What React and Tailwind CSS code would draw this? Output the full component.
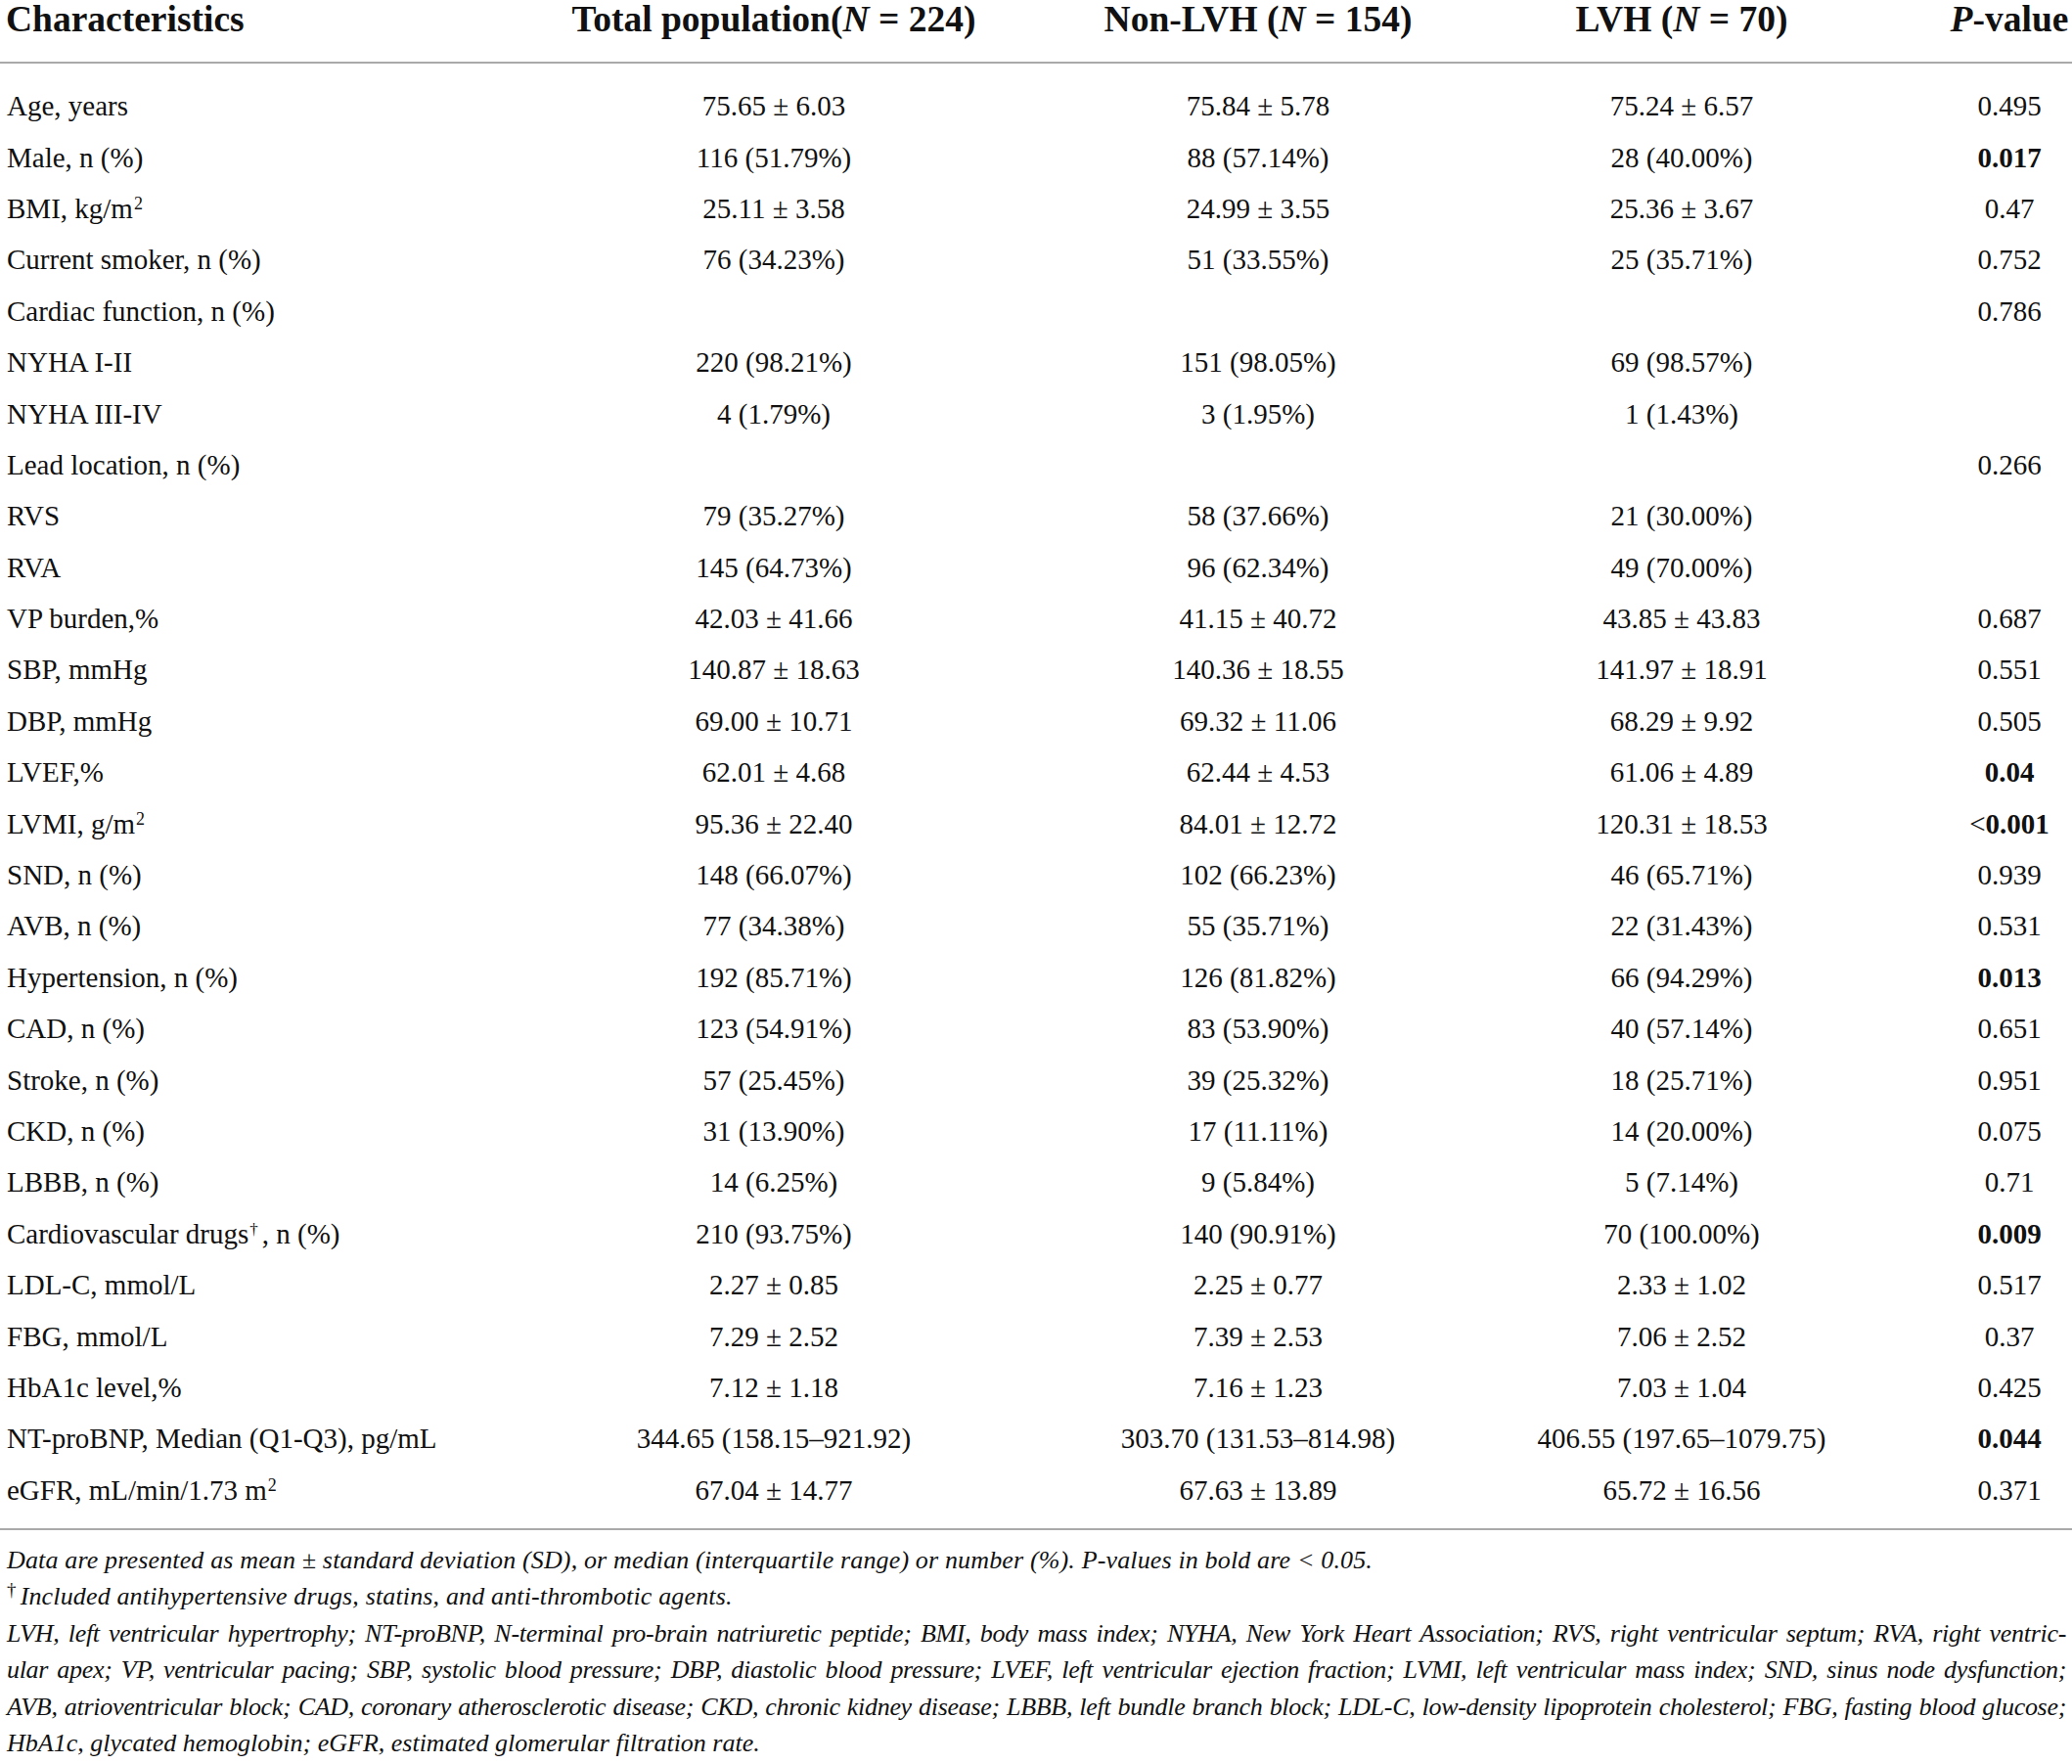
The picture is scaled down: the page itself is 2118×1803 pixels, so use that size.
import React from 'react';

const rows = [
    { label: 'Age, years', total: '75.65 ± 6.03', non: '75.84 ± 5.78', lvh: '75.24 ± 6.57', p: '0.495' },
    { label: 'Male, n (%)', total: '116 (51.79%)', non: '88 (57.14%)', lvh: '28 (40.00%)', p: '0.017', bold: true },
    { label: 'BMI, kg/m', sup: '2', total: '25.11 ± 3.58', non: '24.99 ± 3.55', lvh: '25.36 ± 3.67', p: '0.47' },
    { label: 'Current smoker, n (%)', total: '76 (34.23%)', non: '51 (33.55%)', lvh: '25 (35.71%)', p: '0.752' },
    { label: 'Cardiac function, n (%)', total: '', non: '', lvh: '', p: '0.786' },
    { label: 'NYHA I-II', total: '220 (98.21%)', non: '151 (98.05%)', lvh: '69 (98.57%)', p: '' },
    { label: 'NYHA III-IV', total: '4 (1.79%)', non: '3 (1.95%)', lvh: '1 (1.43%)', p: '' },
    { label: 'Lead location, n (%)', total: '', non: '', lvh: '', p: '0.266' },
    { label: 'RVS', total: '79 (35.27%)', non: '58 (37.66%)', lvh: '21 (30.00%)', p: '' },
    { label: 'RVA', total: '145 (64.73%)', non: '96 (62.34%)', lvh: '49 (70.00%)', p: '' },
    { label: 'VP burden,%', total: '42.03 ± 41.66', non: '41.15 ± 40.72', lvh: '43.85 ± 43.83', p: '0.687' },
    { label: 'SBP, mmHg', total: '140.87 ± 18.63', non: '140.36 ± 18.55', lvh: '141.97 ± 18.91', p: '0.551' },
    { label: 'DBP, mmHg', total: '69.00 ± 10.71', non: '69.32 ± 11.06', lvh: '68.29 ± 9.92', p: '0.505' },
    { label: 'LVEF,%', total: '62.01 ± 4.68', non: '62.44 ± 4.53', lvh: '61.06 ± 4.89', p: '0.04', bold: true },
    { label: 'LVMI, g/m', sup: '2', total: '95.36 ± 22.40', non: '84.01 ± 12.72', lvh: '120.31 ± 18.53', p: '0.001', bold: true, lt: true },
    { label: 'SND, n (%)', total: '148 (66.07%)', non: '102 (66.23%)', lvh: '46 (65.71%)', p: '0.939' },
    { label: 'AVB, n (%)', total: '77 (34.38%)', non: '55 (35.71%)', lvh: '22 (31.43%)', p: '0.531' },
    { label: 'Hypertension, n (%)', total: '192 (85.71%)', non: '126 (81.82%)', lvh: '66 (94.29%)', p: '0.013', bold: true },
    { label: 'CAD, n (%)', total: '123 (54.91%)', non: '83 (53.90%)', lvh: '40 (57.14%)', p: '0.651' },
    { label: 'Stroke, n (%)', total: '57 (25.45%)', non: '39 (25.32%)', lvh: '18 (25.71%)', p: '0.951' },
    { label: 'CKD, n (%)', total: '31 (13.90%)', non: '17 (11.11%)', lvh: '14 (20.00%)', p: '0.075' },
    { label: 'LBBB, n (%)', total: '14 (6.25%)', non: '9 (5.84%)', lvh: '5 (7.14%)', p: '0.71' },
    { label: 'Cardiovascular drugs', dagger: true, total: '210 (93.75%)', non: '140 (90.91%)', lvh: '70 (100.00%)', p: '0.009', bold: true },
    { label: 'LDL-C, mmol/L', total: '2.27 ± 0.85', non: '2.25 ± 0.77', lvh: '2.33 ± 1.02', p: '0.517' },
    { label: 'FBG, mmol/L', total: '7.29 ± 2.52', non: '7.39 ± 2.53', lvh: '7.06 ± 2.52', p: '0.37' },
    { label: 'HbA1c level,%', total: '7.12 ± 1.18', non: '7.16 ± 1.23', lvh: '7.03 ± 1.04', p: '0.425' },
    { label: 'NT-proBNP, Median (Q1-Q3), pg/mL', total: '344.65 (158.15–921.92)', non: '303.70 (131.53–814.98)', lvh: '406.55 (197.65–1079.75)', p: '0.044', bold: true },
    { label: 'eGFR, mL/min/1.73 m', sup: '2', total: '67.04 ± 14.77', non: '67.63 ± 13.89', lvh: '65.72 ± 16.56', p: '0.371' },
];

const cols = 'grid grid-cols-[458px_666px_324px_542px_128px]';

const Label = ({ row }) => {
    if (row.dagger) {
        return (
            <span>
                {row.label}
                <sup className="text-[17px] ml-[1px] mr-[4px]">†</sup>, n (%)
            </span>
        );
    }
    return (
        <span>
            {row.label}
            {row.sup && <sup className="text-[18px] ml-[1px]">{row.sup}</sup>}
        </span>
    );
};

const App = () => {
    return (
        <div className="w-[2118px] min-h-[1803px] bg-white text-[#111] font-['Liberation_Serif',serif]">
            {/* Header */}
            <div className={`${cols} h-[63px] items-start text-[37.5px] font-bold leading-[40px]`}>
                <div className="pl-[6px] whitespace-nowrap">Characteristics</div>
                <div className="text-center whitespace-nowrap">
                    Total population(<i>N</i> = 224)
                </div>
                <div className="text-center whitespace-nowrap">
                    Non-LVH (<i>N</i> = 154)
                </div>
                <div className="text-center whitespace-nowrap">
                    LVH (<i>N</i> = 70)
                </div>
                <div className="text-center whitespace-nowrap">
                    <i>P</i>-value
                </div>
            </div>
            <div className="h-[2px] bg-[#a9a9a9]" />

            {/* Body */}
            <div className="pt-[17px] pb-[13px] text-[29px]">
                {rows.map((row) => (
                    <div key={row.label} className={`${cols} h-[52.4px] items-center leading-[52px]`}>
                        <div className="pl-[7px] whitespace-nowrap">
                            <Label row={row} />
                        </div>
                        <div className="text-center whitespace-nowrap">{row.total}</div>
                        <div className="text-center whitespace-nowrap">{row.non}</div>
                        <div className="text-center whitespace-nowrap">{row.lvh}</div>
                        <div className="text-center whitespace-nowrap">
                            {row.lt && <span>&lt;</span>}
                            {row.bold ? <b>{row.p}</b> : row.p}
                        </div>
                    </div>
                ))}
            </div>
            <div className="h-[2px] bg-[#a9a9a9]" />

            {/* Footnotes */}
            <div className="pt-[12px] pl-[7px] pr-[6px] text-[26px] italic leading-[37.4px]">
                <p className="whitespace-nowrap tracking-[0.15px]">
                    Data are presented as mean ± standard deviation (SD), or median (interquartile range) or number (%). P-values in bold are &lt; 0.05.
                </p>
                <p className="whitespace-nowrap tracking-[0.15px]">
                    <sup className="not-italic text-[19px] mr-[4px]">†</sup>Included antihypertensive drugs, statins, and anti-thrombotic agents.
                </p>
                <p className="whitespace-nowrap tracking-[-0.3px] text-justify [text-align-last:justify]">
                    LVH, left ventricular hypertrophy; NT-proBNP, N-terminal pro-brain natriuretic peptide; BMI, body mass index; NYHA, New York Heart Association; RVS, right ventricular septum; RVA, right ventric-
                </p>
                <p className="whitespace-nowrap tracking-[-0.3px] text-justify [text-align-last:justify]">
                    ular apex; VP, ventricular pacing; SBP, systolic blood pressure; DBP, diastolic blood pressure; LVEF, left ventricular ejection fraction; LVMI, left ventricular mass index; SND, sinus node dysfunction;
                </p>
                <p className="whitespace-nowrap tracking-[-0.3px] text-justify [text-align-last:justify]">
                    AVB, atrioventricular block; CAD, coronary atherosclerotic disease; CKD, chronic kidney disease; LBBB, left bundle branch block; LDL-C, low-density lipoprotein cholesterol; FBG, fasting blood glucose;
                </p>
                <p className="whitespace-nowrap">HbA1c, glycated hemoglobin; eGFR, estimated glomerular filtration rate.</p>
            </div>
        </div>
    );
};

export default App;
